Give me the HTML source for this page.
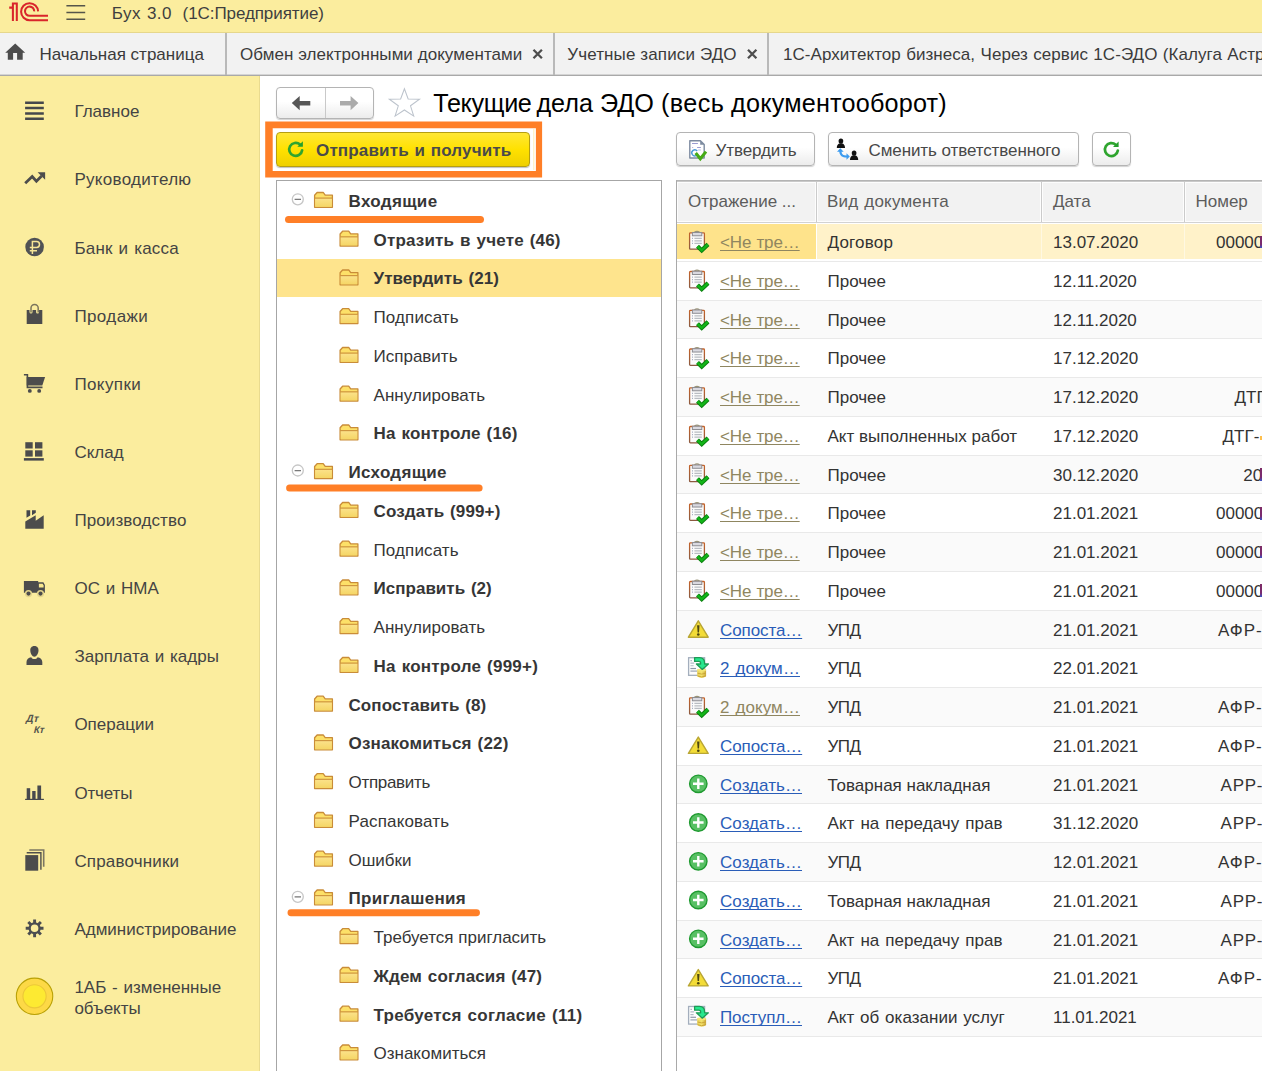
<!DOCTYPE html><html><head><meta charset="utf-8"><title>1C</title><style>
*{box-sizing:border-box;margin:0;padding:0}
html,body{width:1262px;height:1071px;overflow:hidden;background:#fff}
body{font-family:"Liberation Sans",sans-serif;font-size:17px;color:#3b3b3b;position:relative}
.abs{position:absolute}
.t{position:absolute;white-space:nowrap;line-height:20px;height:20px}
#top{left:0;top:0;width:1262px;height:33px;background:#fbed9e;border-bottom:1px solid #e6d78c}
#tabs{left:0;top:33px;width:1262px;height:42px;background:#f2f2f2}
#tabline{left:0;top:74px;width:1262px;height:2px;background:linear-gradient(#d4d4d4 0,#d4d4d4 50%,#a9a9a9 50%,#a9a9a9 100%)}
.vsep{position:absolute;top:33px;height:42px;width:2px;background:#b9b9b9}
#side{left:0;top:76px;width:260px;height:995px;background:#fbed9e;border-right:1px solid #e9db8f}
.sb{position:absolute;left:74.4px;white-space:nowrap;line-height:20px;height:20px;color:#444}
.btn{position:absolute;border:1px solid #b4b4b4;border-radius:4px;background:linear-gradient(#ffffff,#ffffff 45%,#ececec);box-shadow:0 1px 1px rgba(0,0,0,.18)}
#tree{left:276px;top:180px;width:386px;height:900px;border:1px solid #a6a6a6;background:#fff}
#tbl{left:676px;top:180px;width:600px;height:900px;border:1px solid #a9a9a9;border-top-color:#b4b4b4;background:#fff}
.tr{position:absolute;white-space:nowrap;line-height:20px;height:20px;color:#363636}
.b{font-weight:bold}
.ul{position:absolute;height:6px;border-radius:3px;background:#ff7f27}
.lnk{text-decoration:underline;text-decoration-thickness:1px;text-underline-offset:2px;text-decoration-skip-ink:none}
.olive{color:#8f8660}
.blue{color:#2a5db8}
</style></head><body>
<div id="top" class="abs"></div>
<div class="t" style="left:111.8px;top:1.1px;line-height:26px;height:26px;color:#3f3f3f;letter-spacing:0.45px;word-spacing:0.8px">Бух 3.0</div>
<div class="t" style="left:182.6px;top:1.1px;line-height:26px;height:26px;color:#3f3f3f;letter-spacing:-0.08px">(1С:Предприятие)</div>
<div id="tabs" class="abs"></div><div id="tabline" class="abs"></div>
<div class="vsep" style="left:225px"></div>
<div class="vsep" style="left:553px"></div>
<div class="vsep" style="left:767px"></div>
<div class="t" style="left:39.4px;top:44.6px;color:#3b3b3b;letter-spacing:0px;word-spacing:0px">Начальная страница</div>
<div class="t" style="left:240px;top:44.6px;color:#3b3b3b;letter-spacing:0.05px;word-spacing:0px">Обмен электронными документами</div>
<div class="t" style="left:567.3px;top:44.6px;color:#3b3b3b;letter-spacing:0.12px;word-spacing:0px">Учетные записи ЭДО</div>
<div class="t" style="left:783px;top:44.6px;color:#3b3b3b;letter-spacing:0.05px;word-spacing:0.6px">1С-Архитектор бизнеса, Через сервис 1С-ЭДО (Калуга Астрал)</div>
<div id="side" class="abs"></div>
<div class="sb" style="top:102.30px;letter-spacing:0px;word-spacing:0px">Главное</div>
<div class="sb" style="top:170.42px;letter-spacing:0.3px;word-spacing:0px">Руководителю</div>
<div class="sb" style="top:238.55px;letter-spacing:0.2px;word-spacing:1px">Банк и касса</div>
<div class="sb" style="top:306.68px;letter-spacing:0.4px;word-spacing:0px">Продажи</div>
<div class="sb" style="top:374.80px;letter-spacing:0.4px;word-spacing:0px">Покупки</div>
<div class="sb" style="top:442.93px;letter-spacing:0px;word-spacing:0px">Склад</div>
<div class="sb" style="top:511.05px;letter-spacing:0.1px;word-spacing:0px">Производство</div>
<div class="sb" style="top:579.18px;letter-spacing:0.03px;word-spacing:1px">ОС и НМА</div>
<div class="sb" style="top:647.30px;letter-spacing:0.02px;word-spacing:1px">Зарплата и кадры</div>
<div class="sb" style="top:715.43px;letter-spacing:0px;word-spacing:0px">Операции</div>
<div class="sb" style="top:783.55px;letter-spacing:-0.15px;word-spacing:0px">Отчеты</div>
<div class="sb" style="top:851.68px;letter-spacing:0.17px;word-spacing:0px">Справочники</div>
<div class="sb" style="top:919.80px;letter-spacing:0px;word-spacing:0px">Администрирование</div>
<div class="sb" style="top:977.6px;word-spacing:1px">1АБ - измененные</div>
<div class="sb" style="top:998.6px">объекты</div>
<div class="btn" style="left:276px;top:87px;width:98px;height:32px"></div>
<div class="abs" style="left:325px;top:88px;width:1px;height:30px;background:#c9c9c9"></div>
<div class="t" style="left:433.3px;top:88.2px;font-size:25.2px;line-height:30px;height:30px;color:#000;letter-spacing:-0.35px">Текущие</div>
<div class="t" style="left:536.4px;top:88.2px;font-size:25.2px;line-height:30px;height:30px;color:#000;letter-spacing:0px">дела</div>
<div class="t" style="left:599.9px;top:88.2px;font-size:25.2px;line-height:30px;height:30px;color:#000;letter-spacing:0px">ЭДО</div>
<div class="t" style="left:660.9px;top:88.2px;font-size:25.2px;line-height:30px;height:30px;color:#000;letter-spacing:0.42px">(весь</div>
<div class="t" style="left:731.1px;top:88.2px;font-size:25.2px;line-height:30px;height:30px;color:#000;letter-spacing:0.2px">документооборот)</div>
<svg class="abs" style="left:260px;top:116px" width="290" height="66" viewBox="260 116 290 66"><path d="M265.2,121.4 H542.1 V177.4 H265.2 Z M272.7,128.3 V171 H535.9 V128.3 Z" fill="#ff7f27" fill-rule="evenodd"/><path d="M533.8,129 V170" stroke="#ffe9a0" stroke-width="0.8"/></svg>
<div class="abs" style="left:276px;top:132px;width:254px;height:35px;border:1px solid #b59e12;border-radius:4px;background:linear-gradient(#ffe736,#ffe100 50%,#efd000);box-shadow:0 1px 1px rgba(0,0,0,.25)"></div>
<div class="t b" style="left:316px;top:140.7px;color:#4a4a4a;letter-spacing:0.16px;word-spacing:0.8px">Отправить и получить</div>
<div class="btn" style="left:676px;top:132px;width:139px;height:34px"></div>
<div class="t" style="left:715.5px;top:140.9px;color:#484848;letter-spacing:-0.1px">Утвердить</div>
<div class="btn" style="left:828px;top:132px;width:251px;height:34px"></div>
<div class="t" style="left:868.5px;top:140.9px;color:#484848;letter-spacing:-0.09px">Сменить ответственного</div>
<div class="btn" style="left:1092px;top:132px;width:39px;height:34px"></div>
<div id="tree" class="abs"></div>
<div class="abs" style="left:277px;top:258.50px;width:384px;height:38.75px;background:#fee48d"></div>
<div class="tr b" style="left:348.5px;top:191.78px;letter-spacing:0.34px;word-spacing:0px">Входящие</div>
<div class="tr b" style="left:373.5px;top:230.53px;letter-spacing:0.175px;word-spacing:1px">Отразить в учете (46)</div>
<div class="tr b" style="left:373.5px;top:269.27px;letter-spacing:0.07px;word-spacing:1px">Утвердить (21)</div>
<div class="tr" style="left:373.5px;top:308.02px;letter-spacing:0.12px;word-spacing:0px">Подписать</div>
<div class="tr" style="left:373.5px;top:346.77px;letter-spacing:0px;word-spacing:0px">Исправить</div>
<div class="tr" style="left:373.5px;top:385.52px;letter-spacing:0.05px;word-spacing:0px">Аннулировать</div>
<div class="tr b" style="left:373.5px;top:424.27px;letter-spacing:0.19px;word-spacing:1px">На контроле (16)</div>
<div class="tr b" style="left:348.5px;top:463.02px;letter-spacing:0.3px;word-spacing:0px">Исходящие</div>
<div class="tr b" style="left:373.5px;top:501.77px;letter-spacing:0.12px;word-spacing:1px">Создать (999+)</div>
<div class="tr" style="left:373.5px;top:540.52px;letter-spacing:0.12px;word-spacing:0px">Подписать</div>
<div class="tr b" style="left:373.5px;top:579.27px;letter-spacing:0.02px;word-spacing:1px">Исправить (2)</div>
<div class="tr" style="left:373.5px;top:618.02px;letter-spacing:0.05px;word-spacing:0px">Аннулировать</div>
<div class="tr b" style="left:373.5px;top:656.77px;letter-spacing:0.23px;word-spacing:1px">На контроле (999+)</div>
<div class="tr b" style="left:348.5px;top:695.52px;letter-spacing:0.09px;word-spacing:1px">Сопоставить (8)</div>
<div class="tr b" style="left:348.5px;top:734.27px;letter-spacing:0.18px;word-spacing:1px">Ознакомиться (22)</div>
<div class="tr" style="left:348.5px;top:773.02px;letter-spacing:-0.3px;word-spacing:0px">Отправить</div>
<div class="tr" style="left:348.5px;top:811.77px;letter-spacing:0.15px;word-spacing:0px">Распаковать</div>
<div class="tr" style="left:348.5px;top:850.52px;letter-spacing:0px;word-spacing:0px">Ошибки</div>
<div class="tr b" style="left:348.5px;top:889.27px;letter-spacing:0.3px;word-spacing:0px">Приглашения</div>
<div class="tr" style="left:373.5px;top:928.02px;letter-spacing:0px;word-spacing:0px">Требуется пригласить</div>
<div class="tr b" style="left:373.5px;top:966.77px;letter-spacing:0.13px;word-spacing:1px">Ждем согласия (47)</div>
<div class="tr b" style="left:373.5px;top:1005.52px;letter-spacing:0.28px;word-spacing:1px">Требуется согласие (11)</div>
<div class="tr" style="left:373.5px;top:1044.28px;letter-spacing:0px;word-spacing:0px">Ознакомиться</div>
<svg class="abs" style="left:0;top:0;pointer-events:none" width="700" height="1071" viewBox="0 0 700 1071"><g stroke="#ff7f27" stroke-linecap="round"><path d="M288.6,219.5 H480.4" stroke-width="7.2"/><path d="M289.6,488 H479.1" stroke-width="7"/><path d="M291,912.75 H476.5" stroke-width="6.9"/></g></svg>
<div id="tbl" class="abs"></div>
<div class="abs" style="left:677px;top:181px;width:585px;height:42px;background:#fff;border-top:1px solid #c9c9c9;border-bottom:1px solid #d2d2d2"></div>
<div class="abs" style="left:677px;top:182px;width:139px;height:40px;background:#f2f2f2;box-shadow:inset 0 0 0 1px #fdfdfd"></div>
<div class="abs" style="left:817px;top:182px;width:224px;height:40px;background:#f2f2f2;box-shadow:inset 0 0 0 1px #fdfdfd"></div>
<div class="abs" style="left:1042px;top:182px;width:142px;height:40px;background:#f2f2f2;box-shadow:inset 0 0 0 1px #fdfdfd"></div>
<div class="abs" style="left:1185px;top:182px;width:115px;height:40px;background:#f2f2f2;box-shadow:inset 0 0 0 1px #fdfdfd"></div>
<div class="abs" style="left:816px;top:182px;width:1px;height:40px;background:#cbcbcb"></div>
<div class="abs" style="left:1041px;top:182px;width:1px;height:40px;background:#cbcbcb"></div>
<div class="abs" style="left:1184px;top:182px;width:1px;height:40px;background:#cbcbcb"></div>
<div class="t" style="left:688px;top:192.1px;color:#5c5c5c">Отражение ...</div>
<div class="t" style="left:827px;top:192.1px;color:#5c5c5c;letter-spacing:0.2px;word-spacing:1px">Вид документа</div>
<div class="t" style="left:1053px;top:192.1px;color:#5c5c5c">Дата</div>
<div class="t" style="left:1195.5px;top:192.1px;color:#5c5c5c">Номер</div>
<div class="abs" style="left:677px;top:223.6px;width:139px;height:35.4px;background:#fee38b"></div>
<div class="abs" style="left:817px;top:223.6px;width:445px;height:35.4px;background:#fff2c9"></div>
<div class="abs" style="left:1041px;top:223.6px;width:1px;height:35.4px;background:#fff8e2"></div>
<div class="abs" style="left:1184px;top:223.6px;width:1px;height:35.4px;background:#fff8e2"></div>
<div class="abs" style="left:677px;top:260.75px;width:585px;height:1px;background:#e9e9e9"></div>
<div class="t lnk olive" style="left:720px;top:233.18px;letter-spacing:-0.1px;word-spacing:0.4px">&lt;Не тре…</div>
<div class="t" style="left:827.5px;top:233.18px;color:#333;letter-spacing:0.2px">Договор</div>
<div class="t" style="left:1053px;top:233.18px;color:#333">13.07.2020</div>
<div class="t" style="left:1216px;top:233.18px;color:#333;letter-spacing:0px">00000</div>
<div class="abs" style="left:1260px;top:235.68px;width:2px;height:12.6px;background:linear-gradient(#7d2c66,#7a2a70 70%,#3b55c8)"></div>
<div class="abs" style="left:677px;top:299.50px;width:585px;height:1px;background:#e9e9e9"></div>
<div class="t lnk olive" style="left:720px;top:271.93px;letter-spacing:-0.1px;word-spacing:0.4px">&lt;Не тре…</div>
<div class="t" style="left:827.5px;top:271.93px;color:#333;">Прочее</div>
<div class="t" style="left:1053px;top:271.93px;color:#333">12.11.2020</div>
<div class="abs" style="left:677px;top:300.50px;width:585px;height:37.75px;background:#fafafa"></div>
<div class="abs" style="left:677px;top:338.25px;width:585px;height:1px;background:#e9e9e9"></div>
<div class="t lnk olive" style="left:720px;top:310.68px;letter-spacing:-0.1px;word-spacing:0.4px">&lt;Не тре…</div>
<div class="t" style="left:827.5px;top:310.68px;color:#333;">Прочее</div>
<div class="t" style="left:1053px;top:310.68px;color:#333">12.11.2020</div>
<div class="abs" style="left:677px;top:377.00px;width:585px;height:1px;background:#e9e9e9"></div>
<div class="t lnk olive" style="left:720px;top:349.43px;letter-spacing:-0.1px;word-spacing:0.4px">&lt;Не тре…</div>
<div class="t" style="left:827.5px;top:349.43px;color:#333;">Прочее</div>
<div class="t" style="left:1053px;top:349.43px;color:#333">17.12.2020</div>
<div class="abs" style="left:677px;top:378.00px;width:585px;height:37.75px;background:#fafafa"></div>
<div class="abs" style="left:677px;top:415.75px;width:585px;height:1px;background:#e9e9e9"></div>
<div class="t lnk olive" style="left:720px;top:388.18px;letter-spacing:-0.1px;word-spacing:0.4px">&lt;Не тре…</div>
<div class="t" style="left:827.5px;top:388.18px;color:#333;">Прочее</div>
<div class="t" style="left:1053px;top:388.18px;color:#333">17.12.2020</div>
<div class="t" style="left:1234.5px;top:388.18px;color:#333;letter-spacing:0px">ДТГ</div>
<div class="abs" style="left:677px;top:454.50px;width:585px;height:1px;background:#e9e9e9"></div>
<div class="t lnk olive" style="left:720px;top:426.93px;letter-spacing:-0.1px;word-spacing:0.4px">&lt;Не тре…</div>
<div class="t" style="left:827.5px;top:426.93px;color:#333;">Акт выполненных работ</div>
<div class="t" style="left:1053px;top:426.93px;color:#333">17.12.2020</div>
<div class="t" style="left:1222.6px;top:426.93px;color:#333;letter-spacing:0px">ДТГ-</div>
<div class="abs" style="left:1260px;top:436.12px;width:2px;height:4px;background:#ffc04d"></div>
<div class="abs" style="left:677px;top:455.50px;width:585px;height:37.75px;background:#fafafa"></div>
<div class="abs" style="left:677px;top:493.25px;width:585px;height:1px;background:#e9e9e9"></div>
<div class="t lnk olive" style="left:720px;top:465.68px;letter-spacing:-0.1px;word-spacing:0.4px">&lt;Не тре…</div>
<div class="t" style="left:827.5px;top:465.68px;color:#333;">Прочее</div>
<div class="t" style="left:1053px;top:465.68px;color:#333">30.12.2020</div>
<div class="t" style="left:1243.2px;top:465.68px;color:#333;letter-spacing:0px">20</div>
<div class="abs" style="left:1260px;top:468.18px;width:2px;height:12.6px;background:linear-gradient(#7d2c66,#7a2a70 70%,#3b55c8)"></div>
<div class="abs" style="left:677px;top:532.00px;width:585px;height:1px;background:#e9e9e9"></div>
<div class="t lnk olive" style="left:720px;top:504.43px;letter-spacing:-0.1px;word-spacing:0.4px">&lt;Не тре…</div>
<div class="t" style="left:827.5px;top:504.43px;color:#333;">Прочее</div>
<div class="t" style="left:1053px;top:504.43px;color:#333">21.01.2021</div>
<div class="t" style="left:1216px;top:504.43px;color:#333;letter-spacing:0px">00000</div>
<div class="abs" style="left:1260px;top:506.93px;width:2px;height:12.6px;background:linear-gradient(#7d2c66,#7a2a70 70%,#3b55c8)"></div>
<div class="abs" style="left:677px;top:533.00px;width:585px;height:37.75px;background:#fafafa"></div>
<div class="abs" style="left:677px;top:570.75px;width:585px;height:1px;background:#e9e9e9"></div>
<div class="t lnk olive" style="left:720px;top:543.17px;letter-spacing:-0.1px;word-spacing:0.4px">&lt;Не тре…</div>
<div class="t" style="left:827.5px;top:543.17px;color:#333;">Прочее</div>
<div class="t" style="left:1053px;top:543.17px;color:#333">21.01.2021</div>
<div class="t" style="left:1216px;top:543.17px;color:#333;letter-spacing:0px">00000</div>
<div class="abs" style="left:1260px;top:545.67px;width:2px;height:12.6px;background:linear-gradient(#7d2c66,#7a2a70 70%,#3b55c8)"></div>
<div class="abs" style="left:677px;top:609.50px;width:585px;height:1px;background:#e9e9e9"></div>
<div class="t lnk olive" style="left:720px;top:581.92px;letter-spacing:-0.1px;word-spacing:0.4px">&lt;Не тре…</div>
<div class="t" style="left:827.5px;top:581.92px;color:#333;">Прочее</div>
<div class="t" style="left:1053px;top:581.92px;color:#333">21.01.2021</div>
<div class="t" style="left:1216px;top:581.92px;color:#333;letter-spacing:0px">00000</div>
<div class="abs" style="left:1260px;top:584.42px;width:2px;height:12.6px;background:linear-gradient(#7d2c66,#7a2a70 70%,#3b55c8)"></div>
<div class="abs" style="left:677px;top:610.50px;width:585px;height:37.75px;background:#fafafa"></div>
<div class="abs" style="left:677px;top:648.25px;width:585px;height:1px;background:#e9e9e9"></div>
<div class="t lnk blue" style="left:720px;top:620.67px;letter-spacing:-0.1px">Сопоста…</div>
<div class="t" style="left:827.5px;top:620.67px;color:#333;letter-spacing:-0.5px">УПД</div>
<div class="t" style="left:1053px;top:620.67px;color:#333">21.01.2021</div>
<div class="t" style="left:1218px;top:620.67px;color:#333;letter-spacing:1.0px">АФР-</div>
<div class="abs" style="left:677px;top:687.00px;width:585px;height:1px;background:#e9e9e9"></div>
<div class="t lnk blue" style="left:720px;top:659.42px;letter-spacing:0.1px;word-spacing:1px">2 докум…</div>
<div class="t" style="left:827.5px;top:659.42px;color:#333;letter-spacing:-0.5px">УПД</div>
<div class="t" style="left:1053px;top:659.42px;color:#333">22.01.2021</div>
<div class="abs" style="left:677px;top:688.00px;width:585px;height:37.75px;background:#fafafa"></div>
<div class="abs" style="left:677px;top:725.75px;width:585px;height:1px;background:#e9e9e9"></div>
<div class="t lnk olive" style="left:720px;top:698.17px;letter-spacing:0.1px;word-spacing:1px">2 докум…</div>
<div class="t" style="left:827.5px;top:698.17px;color:#333;letter-spacing:-0.5px">УПД</div>
<div class="t" style="left:1053px;top:698.17px;color:#333">21.01.2021</div>
<div class="t" style="left:1218px;top:698.17px;color:#333;letter-spacing:1.0px">АФР-</div>
<div class="abs" style="left:677px;top:764.50px;width:585px;height:1px;background:#e9e9e9"></div>
<div class="t lnk blue" style="left:720px;top:736.92px;letter-spacing:-0.1px">Сопоста…</div>
<div class="t" style="left:827.5px;top:736.92px;color:#333;letter-spacing:-0.5px">УПД</div>
<div class="t" style="left:1053px;top:736.92px;color:#333">21.01.2021</div>
<div class="t" style="left:1218px;top:736.92px;color:#333;letter-spacing:1.0px">АФР-</div>
<div class="abs" style="left:677px;top:765.50px;width:585px;height:37.75px;background:#fafafa"></div>
<div class="abs" style="left:677px;top:803.25px;width:585px;height:1px;background:#e9e9e9"></div>
<div class="t lnk blue" style="left:720px;top:775.67px;letter-spacing:0.05px">Создать…</div>
<div class="t" style="left:827.5px;top:775.67px;color:#333;">Товарная накладная</div>
<div class="t" style="left:1053px;top:775.67px;color:#333">21.01.2021</div>
<div class="t" style="left:1220.6px;top:775.67px;color:#333;letter-spacing:0.7px">АРР-</div>
<div class="abs" style="left:677px;top:842.00px;width:585px;height:1px;background:#e9e9e9"></div>
<div class="t lnk blue" style="left:720px;top:814.42px;letter-spacing:0.05px">Создать…</div>
<div class="t" style="left:827.5px;top:814.42px;color:#333;letter-spacing:0.05px;word-spacing:1.2px">Акт на передачу прав</div>
<div class="t" style="left:1053px;top:814.42px;color:#333">31.12.2020</div>
<div class="t" style="left:1220.6px;top:814.42px;color:#333;letter-spacing:0.7px">АРР-</div>
<div class="abs" style="left:677px;top:843.00px;width:585px;height:37.75px;background:#fafafa"></div>
<div class="abs" style="left:677px;top:880.75px;width:585px;height:1px;background:#e9e9e9"></div>
<div class="t lnk blue" style="left:720px;top:853.17px;letter-spacing:0.05px">Создать…</div>
<div class="t" style="left:827.5px;top:853.17px;color:#333;letter-spacing:-0.5px">УПД</div>
<div class="t" style="left:1053px;top:853.17px;color:#333">12.01.2021</div>
<div class="t" style="left:1218px;top:853.17px;color:#333;letter-spacing:1.0px">АФР-</div>
<div class="abs" style="left:677px;top:919.50px;width:585px;height:1px;background:#e9e9e9"></div>
<div class="t lnk blue" style="left:720px;top:891.92px;letter-spacing:0.05px">Создать…</div>
<div class="t" style="left:827.5px;top:891.92px;color:#333;">Товарная накладная</div>
<div class="t" style="left:1053px;top:891.92px;color:#333">21.01.2021</div>
<div class="t" style="left:1220.6px;top:891.92px;color:#333;letter-spacing:0.7px">АРР-</div>
<div class="abs" style="left:677px;top:920.50px;width:585px;height:37.75px;background:#fafafa"></div>
<div class="abs" style="left:677px;top:958.25px;width:585px;height:1px;background:#e9e9e9"></div>
<div class="t lnk blue" style="left:720px;top:930.67px;letter-spacing:0.05px">Создать…</div>
<div class="t" style="left:827.5px;top:930.67px;color:#333;letter-spacing:0.05px;word-spacing:1.2px">Акт на передачу прав</div>
<div class="t" style="left:1053px;top:930.67px;color:#333">21.01.2021</div>
<div class="t" style="left:1220.6px;top:930.67px;color:#333;letter-spacing:0.7px">АРР-</div>
<div class="abs" style="left:677px;top:997.00px;width:585px;height:1px;background:#e9e9e9"></div>
<div class="t lnk blue" style="left:720px;top:969.42px;letter-spacing:-0.1px">Сопоста…</div>
<div class="t" style="left:827.5px;top:969.42px;color:#333;letter-spacing:-0.5px">УПД</div>
<div class="t" style="left:1053px;top:969.42px;color:#333">21.01.2021</div>
<div class="t" style="left:1218px;top:969.42px;color:#333;letter-spacing:1.0px">АФР-</div>
<div class="abs" style="left:677px;top:998.00px;width:585px;height:37.75px;background:#fafafa"></div>
<div class="abs" style="left:677px;top:1035.75px;width:585px;height:1px;background:#e9e9e9"></div>
<div class="t lnk blue" style="left:720px;top:1008.17px;letter-spacing:-0.1px">Поступл…</div>
<div class="t" style="left:827.5px;top:1008.17px;color:#333;letter-spacing:0.03px;word-spacing:1px">Акт об оказании услуг</div>
<div class="t" style="left:1053px;top:1008.17px;color:#333">11.01.2021</div>
<svg class="abs" style="left:0;top:0;pointer-events:none" width="1262" height="1071" viewBox="0 0 1262 1071"><defs><linearGradient id="fg" x1="0" y1="0" x2="0" y2="1"><stop offset="0" stop-color="#fbe28a"/><stop offset="1" stop-color="#f5d666"/></linearGradient>
<g id="folder"><path d="M0.6,15.4 V3.4 L3.1,0.6 H9.2 L11.2,3.3 H18.4 V15.4 Z" fill="#fde068" stroke="#c98c38" stroke-width="1.3" stroke-linejoin="round"/>
<rect x="1.2" y="6.6" width="16.6" height="8.3" fill="url(#fg)"/><path d="M0.6,6.2 H18.4" stroke="#cf963f" stroke-width="1.2"/></g>
<g id="coll"><circle cx="0" cy="0" r="5.5" fill="#fff" stroke="#c6c6c6" stroke-width="1.3"/><path d="M-3.2,0.1 H3.2" stroke="#7a7a7a" stroke-width="1.3"/></g>
<linearGradient id="cb" x1="0" y1="0" x2="0" y2="1"><stop offset="0" stop-color="#c4632a"/><stop offset="1" stop-color="#8b5a40"/></linearGradient>
<g id="clip"><rect x="0.6" y="1.8" width="14.8" height="16.4" rx="0.8" fill="#fbfbfb" stroke="url(#cb)" stroke-width="1.3"/>
<path d="M5.4,1.3 Q8,-0.6 10.6,1.3" fill="none" stroke="#9a9478" stroke-width="1.1"/>
<rect x="3.4" y="1.5" width="9.4" height="3.3" fill="#d9d9e0" stroke="#8d8d92" stroke-width="1"/>
<path d="M5.4,7.4 H12.8 M5.4,9.9 H12.8 M5.4,12.4 H12.8" stroke="#b9bdc2" stroke-width="1.2"/>
<path d="M3,7.4 H4 M3,9.9 H4 M3,12.4 H4" stroke="#aab0c4" stroke-width="1.1"/>
<path d="M8.5,15.3 L12.7,19.4 L19,13.4" fill="none" stroke="#0a7d0e" stroke-width="4.2" stroke-linejoin="miter"/>
<path d="M8.5,15.3 L12.7,19.4 L19,13.4" fill="none" stroke="#12b518" stroke-width="2.4" stroke-linejoin="miter"/></g>
<g id="warn"><path d="M0,0.6 L9.9,17 H-9.9 Z" fill="#f3dc38" stroke="#b9a634" stroke-width="1.4" stroke-linejoin="round"/>
<path d="M-1.2,5 H1.2 L0.7,12.2 H-0.7 Z" fill="#4d4712"/><circle cx="0" cy="14.3" r="1.3" fill="#4d4712"/></g>
<g id="plus"><circle cx="0" cy="0" r="8.7" fill="#58c064" stroke="#1f9a30" stroke-width="1.4"/><path d="M-5.3,0 H5.3 M0,-5.2 V5.2" stroke="#fff" stroke-width="2.4"/></g>
<linearGradient id="cg" x1="0" y1="0" x2="1" y2="0"><stop offset="0" stop-color="#e6cf55"/><stop offset=".5" stop-color="#f3e36a"/><stop offset="1" stop-color="#c9a63a"/></linearGradient>
<g id="doc2"><rect x="0.6" y="0.7" width="16" height="17.6" fill="#fdfdfd" stroke="#a3aebd" stroke-width="1.3"/>
<path d="M2.4,3.6 H4 M2.4,6.1 H6.2 M2.4,8.8 H5.6" stroke="#b3bac6" stroke-width="1.1"/><path d="M2.4,11.5 H8 " stroke="#8e97a8" stroke-width="1.2"/><path d="M2.4,14.1 H9" stroke="#b3bac6" stroke-width="1.6"/>
<path d="M9.2,12.6 H18.1 V19.3 Q13.6,22.6 9.2,19.3 Z" fill="url(#cg)"/>
<path d="M9.6,16.2 Q13.6,18 17.8,16.2 M9.6,19 Q13.6,20.8 17.8,19" stroke="#c8a233" stroke-width="0.9" fill="none"/>
<ellipse cx="13.65" cy="13" rx="4.4" ry="1.5" fill="#f3e674"/>
<path d="M6.6,0.6 H11.4 Q16.6,0.6 16.6,6.2 V7 H20.4 L14.3,12.4 L8.4,7 H12.6 V6 Q12.6,4.4 10.8,4.4 H6.6 Z" fill="#27e88d" stroke="#1f9a55" stroke-width="1.3" stroke-linejoin="round"/></g>
<g id="refr"><path d="M4.35,-4.83 A6.5,6.5 0 1 0 6.44,0.90" fill="none" stroke="#2fa52f" stroke-width="2.7" stroke-linecap="round"/><path d="M1.6,-2.7 H7.2 V-8.2 Z" fill="#25a02c"/></g></defs>
<g fill="none" stroke="#d9252b" stroke-width="2.05"><path d="M9.2,7.6 H12.9 M12.9,21 V3.4 H16.8 V21"/><path d="M38.1,11.4 A8.5,8.5 0 1 0 29.6,20.2 H48"/><path d="M34.2,11.4 A4.6,4.6 0 1 0 29.6,15.8 H48"/></g>
<path d="M66.4,5.8 H85.2 M66.4,12.5 H85.2 M66.4,19.2 H85.2" stroke="#55554a" stroke-width="1.6"/>
<path d="M15.2,43.6 L25.2,52.7 H22.7 V59.8 H17.1 V53 H13.1 V59.8 H7.8 V52.7 H5.2 Z" fill="#4c4c4c"/>
<path d="M533.5,49.8 L541.9000000000001,58.2 M541.9000000000001,49.8 L533.5,58.2" stroke="#4d4d4d" stroke-width="2.3"/>
<path d="M748.0,49.8 L756.4000000000001,58.2 M756.4000000000001,49.8 L748.0,58.2" stroke="#4d4d4d" stroke-width="2.3"/>
<path d="M25.1,102.7 H43.8 M25.1,108 H43.8 M25.1,113.4 H43.8 M25.1,118.7 H43.8" stroke="#45474c" stroke-width="2.5"/>
<path d="M25.2,183.2 L32.2,176.6 L36.4,181.2 L41.6,176" fill="none" stroke="#4c4c4c" stroke-width="2.8" stroke-linejoin="miter"/>
<path d="M37.6,172.3 H45.1 V179.8 Z" fill="#4c4c4c"/>
<circle cx="34.6" cy="247" r="9.3" fill="#505255"/>
<path d="M32.4,254 V241.6 H36.6 A2.9,2.9 0 0 1 36.6,247.4 H29.8 M29.8,250.8 H37" fill="none" stroke="#f6e596" stroke-width="1.5"/>
<path d="M26.7,310.1 H29.5 V312 A1.5,1.5 0 0 0 32.5,312 V310.1 H36.1 V312 A1.5,1.5 0 0 0 39.1,312 V310.1 H42.3 V324.1 H26.7 Z" fill="#4c4c4c"/>
<path d="M31,312.4 V308 A3.6,3.6 0 0 1 38.2,308 V312.4" fill="none" stroke="#7b755c" stroke-width="1.5"/>
<path d="M26.7,377.1 H45.1 L42.3,385.6 H26.7 Z" fill="#4c4c4c"/>
<path d="M23.9,374.7 H27.4 V387.4 H42.5" fill="none" stroke="#4c4c4c" stroke-width="1.6"/>
<circle cx="29.8" cy="390.9" r="1.95" fill="#4c4c4c"/><circle cx="39.2" cy="390.9" r="1.95" fill="#4c4c4c"/>
<rect x="25.3" y="442.2" width="7.4" height="6.3" fill="#4c4c4c"/>
<rect x="35" y="442.2" width="7.4" height="6.3" fill="#4c4c4c"/>
<rect x="25.3" y="450.3" width="7.4" height="6.3" fill="#4c4c4c"/>
<rect x="35" y="450.3" width="7.4" height="6.3" fill="#4c4c4c"/>
<rect x="23.9" y="458.1" width="19.9" height="2.5" fill="#45474c"/>
<path d="M25.3,528.7 V521.6 L35.7,515.2 V520.8 L43.7,515.2 V528.7 Z" fill="#4c4c4c"/>
<path d="M26.5,510.2 H30.2 V515.4 L26.5,517.8 Z M32,510.2 H35.8 V512.8 L32,515.3 Z" fill="#45474c"/>
<path d="M23.9,581.1 H38.2 V582.3 H43.4 L44.9,585 V592.8 H23.9 Z" fill="#4c4c4c"/>
<path d="M38.9,583.8 H42.6 L43.6,585.6 V587.6 H38.9 Z" fill="#f8e88f"/>
<circle cx="28.5" cy="593.6" r="3.6" fill="#e3d58c"/><circle cx="28.5" cy="593.6" r="2.05" fill="#4c4c4c"/>
<circle cx="40.5" cy="593.6" r="3.6" fill="#e3d58c"/><circle cx="40.5" cy="593.6" r="2.05" fill="#4c4c4c"/>
<path d="M34.4,646.1 C37.4,646.1 38.6,648.4 38.5,650.6 C38.4,653.6 36.6,656.8 34.4,656.8 C32.2,656.8 30.4,653.6 30.3,650.6 C30.2,648.4 31.4,646.1 34.4,646.1 Z" fill="#4c4c4c"/>
<path d="M26.5,664.9 V662 C26.5,659.4 28.6,657.4 31.2,657.2 C32,658.6 33.2,659.1 34.4,659.1 C35.6,659.1 36.8,658.6 37.6,657.2 C40.2,657.4 42.3,659.4 42.3,662 V664.9 Z" fill="#4c4c4c"/>
<text transform="translate(25.6,722) skewX(-14)" font-family="Liberation Sans, sans-serif" font-size="10.4" font-weight="bold" fill="#55554c" textLength="12.4" lengthAdjust="spacingAndGlyphs">Дт</text>
<text transform="translate(33.2,733.1) skewX(-14)" font-family="Liberation Sans, sans-serif" font-size="9.8" font-weight="bold" fill="#55554c" textLength="10.4" lengthAdjust="spacingAndGlyphs">Кт</text>
<rect x="26.7" y="788.2" width="3.5" height="11" fill="#47494e"/><rect x="32.2" y="791" width="3.4" height="8.2" fill="#47494e"/><rect x="37.4" y="785.5" width="3.7" height="13.7" fill="#47494e"/><rect x="25.1" y="798.8" width="18.8" height="1.2" fill="#47494e"/>
<rect x="25.3" y="855.1" width="12.9" height="15.6" fill="#4c4c4c"/>
<path d="M26.7,852.7 H40.9 V869.7" fill="none" stroke="#4f4f4c" stroke-width="1.4"/>
<path d="M29.3,850 H43.7 V866.7" fill="none" stroke="#7c7762" stroke-width="1.6"/>
<path d="M34.60,923.30 L34.60,919.40 M38.14,924.76 L40.89,922.01 M39.60,928.30 L43.50,928.30 M38.14,931.84 L40.89,934.59 M34.60,933.30 L34.60,937.20 M31.06,931.84 L28.31,934.59 M29.60,928.30 L25.70,928.30 M31.06,924.76 L28.31,922.01" stroke="#4b4d50" stroke-width="2.9"/>
<circle cx="34.6" cy="928.3" r="4.95" fill="none" stroke="#4b4d50" stroke-width="2.3"/>
<circle cx="34.55" cy="996.3" r="18.2" fill="#fdd946" stroke="#b9a106" stroke-width="1.1"/>
<circle cx="34.55" cy="996.3" r="11.6" fill="#fdea32" stroke="#ecc838" stroke-width="1.1"/>
<path d="M291.8,103.1 L299.7,96 V100.9 H310.3 V105.4 H299.7 V110.2 Z" fill="#565656"/>
<path d="M358.4,103.1 L350.6,96 V100.9 H340 V105.4 H350.6 V110.2 Z" fill="#ababab"/>
<polygon points="404.40,88.80 408.16,98.96 419.48,99.23 410.49,105.79 413.72,116.12 404.40,110.00 395.08,116.12 398.31,105.79 389.32,99.23 400.64,98.96" fill="#fff" stroke="#bcc3cc" stroke-width="1.05" stroke-linejoin="miter"/>
<use href="#refr" x="295.7" y="149.4"/>
<use href="#refr" x="1111.4" y="149.6"/>
<path d="M689.8,140.8 H700.4 L704.2,144.6 V158 H689.8 Z" fill="#fff" stroke="#7d8ba0" stroke-width="1.4" stroke-linejoin="round"/>
<path d="M700.2,140.6 L704.4,144.8 H700.2 Z" fill="#7d8ba0"/>
<path d="M692,143.5 H697.9 M697.1,147.5 H700.9" stroke="#9a9cd0" stroke-width="1.1"/><path d="M692.1,147.5 H693.2" stroke="#b4b6dc" stroke-width="1.1"/><path d="M698.2,150 H700.9" stroke="#c4c6e4" stroke-width="1.1"/>
<path d="M697.2,151 A3,3 0 1 0 696.5,155.3" fill="none" stroke="#4b9bd6" stroke-width="1.4"/>
<path d="M695.7,153 L700.3,158.7 L706,151.6" fill="none" stroke="#46ab16" stroke-width="3.1"/>
<ellipse cx="840.9" cy="141" rx="2.35" ry="2.6" fill="#111"/><path d="M836.8,148 C836.8,144.4 838.9,143.3 840.9,143.3 C842.9,143.3 845.0,144.4 845.0,148 Z" fill="#111"/>
<ellipse cx="854.1" cy="153" rx="2.35" ry="2.6" fill="#111"/><path d="M850.0,160 C850.0,156.4 852.1,155.3 854.1,155.3 C856.1,155.3 858.2,156.4 858.2,160 Z" fill="#111"/>
<path d="M840.3,148.2 L843.7,151.8 H841.5 C841.8,154.6 843.6,155.6 846.5,155.6 V153.3 L849.8,156.5 L846.5,159.8 V157.6 C842.4,157.6 839.6,155.8 839.3,151.8 H837 Z" fill="#3d9cf0"/>
<use href="#coll" x="297.8" y="199.28"/>
<use href="#coll" x="297.8" y="470.52"/>
<use href="#coll" x="297.8" y="896.78"/>
<use href="#folder" x="314.00" y="191.88"/>
<use href="#folder" x="339.50" y="230.62"/>
<use href="#folder" x="339.50" y="269.38"/>
<use href="#folder" x="339.50" y="308.12"/>
<use href="#folder" x="339.50" y="346.88"/>
<use href="#folder" x="339.50" y="385.62"/>
<use href="#folder" x="339.50" y="424.38"/>
<use href="#folder" x="314.00" y="463.12"/>
<use href="#folder" x="339.50" y="501.88"/>
<use href="#folder" x="339.50" y="540.62"/>
<use href="#folder" x="339.50" y="579.38"/>
<use href="#folder" x="339.50" y="618.12"/>
<use href="#folder" x="339.50" y="656.88"/>
<use href="#folder" x="314.00" y="695.62"/>
<use href="#folder" x="314.00" y="734.38"/>
<use href="#folder" x="314.00" y="773.12"/>
<use href="#folder" x="314.00" y="811.88"/>
<use href="#folder" x="314.00" y="850.62"/>
<use href="#folder" x="314.00" y="889.38"/>
<use href="#folder" x="339.50" y="928.12"/>
<use href="#folder" x="339.50" y="966.88"/>
<use href="#folder" x="339.50" y="1005.62"/>
<use href="#folder" x="339.50" y="1044.38"/>
<use href="#clip" x="689" y="230.98"/>
<use href="#clip" x="689" y="269.72"/>
<use href="#clip" x="689" y="308.48"/>
<use href="#clip" x="689" y="347.22"/>
<use href="#clip" x="689" y="385.98"/>
<use href="#clip" x="689" y="424.72"/>
<use href="#clip" x="689" y="463.48"/>
<use href="#clip" x="689" y="502.22"/>
<use href="#clip" x="689" y="540.98"/>
<use href="#clip" x="689" y="579.72"/>
<use href="#warn" x="698.3" y="620.18"/>
<use href="#doc2" x="688" y="657.02"/>
<use href="#clip" x="689" y="695.98"/>
<use href="#warn" x="698.3" y="736.42"/>
<use href="#plus" x="698.3" y="783.78"/>
<use href="#plus" x="698.3" y="822.52"/>
<use href="#plus" x="698.3" y="861.28"/>
<use href="#plus" x="698.3" y="900.02"/>
<use href="#plus" x="698.3" y="938.78"/>
<use href="#warn" x="698.3" y="968.92"/>
<use href="#doc2" x="688" y="1005.78"/></svg>
</body></html>
